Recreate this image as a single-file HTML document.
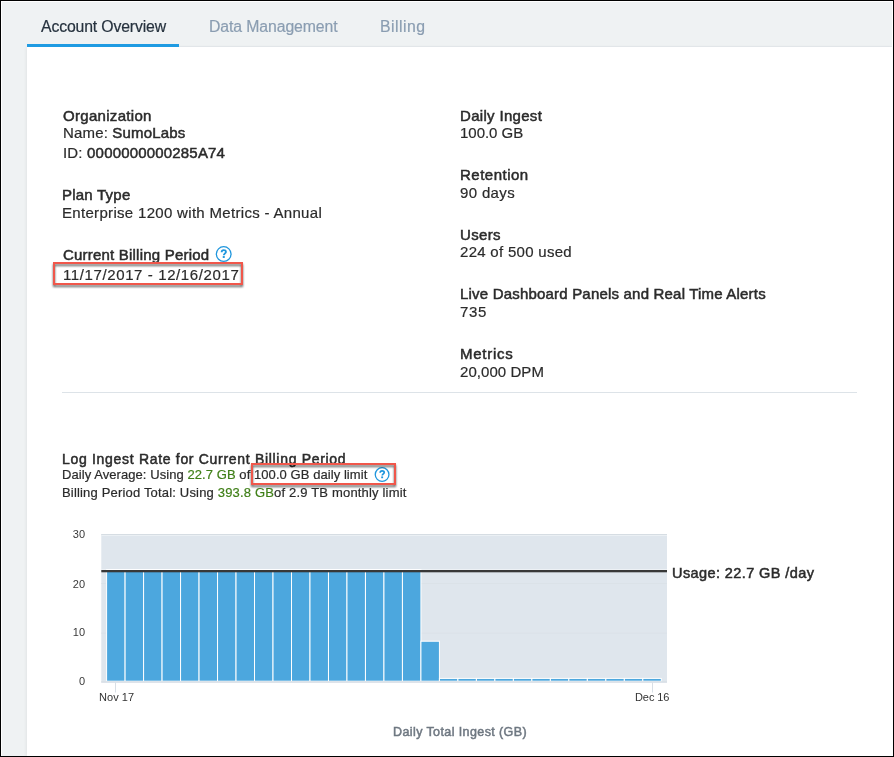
<!DOCTYPE html>
<html><head><meta charset="utf-8"><style>
html,body{margin:0;padding:0;}
body{width:894px;height:757px;position:relative;overflow:hidden;background:#000;font-family:"Liberation Sans",sans-serif;}
#frame{position:absolute;left:1px;top:1px;width:892px;height:755px;background:#fff;}
#bg{position:absolute;left:2px;top:2px;width:890px;height:754px;background:#eff2f3;}
#panel{position:absolute;left:27px;top:47px;width:865px;height:709px;background:#fff;box-shadow:-1px 0 3px rgba(0,0,0,0.06);}
#tabline{position:absolute;left:27px;top:46px;width:865px;height:1px;background:#e7ebee;}
#ul{position:absolute;left:27px;top:44px;width:152px;height:3px;background:#1f9be2;}
#sep{position:absolute;left:62px;top:392px;width:795px;height:1px;background:#dde3e8;}
.t{position:absolute;white-space:nowrap;will-change:transform;}
.t{-webkit-text-stroke:0.2px currentColor;} .m{-webkit-text-stroke:0.5px currentColor;}
.rb{position:absolute;box-sizing:border-box;border:2.6px solid #f0574b;filter:drop-shadow(0.4px 2.4px 0.9px rgba(0,0,0,0.6));}
</style></head><body>
<div id="frame"></div><div id="bg"></div><div id="tabline"></div><div id="panel"></div><div id="ul"></div><div id="sep"></div>
<div class="t" style="left:40.89px;top:18.63px;font-size:15.8px;line-height:15.8px;color:#26323e;letter-spacing:-0.151px;">Account Overview</div>
<div class="t" style="left:209.29px;top:18.63px;font-size:15.8px;line-height:15.8px;color:#8a9db1;letter-spacing:-0.094px;">Data Management</div>
<div class="t" style="left:380.39px;top:18.63px;font-size:15.8px;line-height:15.8px;color:#8a9db1;letter-spacing:0.483px;">Billing</div>
<div class="t m" style="left:63.15px;top:108.10px;font-size:15px;line-height:15px;color:#2b2b2b;letter-spacing:0.308px;">Organization</div>
<div class="t" style="left:62.75px;top:124.90px;font-size:15px;line-height:15px;color:#2b2b2b;letter-spacing:0.159px;">Name: <span class=m>SumoLabs</span></div>
<div class="t" style="left:62.95px;top:145.00px;font-size:15px;line-height:15px;color:#2b2b2b;letter-spacing:0.182px;">ID: <span class=m>0000000000285A74</span></div>
<div class="t m" style="left:62.15px;top:187.30px;font-size:15px;line-height:15px;color:#2b2b2b;letter-spacing:0.225px;">Plan Type</div>
<div class="t" style="left:62.15px;top:205.20px;font-size:15px;line-height:15px;color:#2b2b2b;letter-spacing:0.314px;">Enterprise 1200 with Metrics - Annual</div>
<div class="t m" style="left:63.15px;top:247.00px;font-size:15px;line-height:15px;color:#2b2b2b;letter-spacing:0.206px;">Current Billing Period</div>
<div class="t" style="left:62.95px;top:266.90px;font-size:15px;line-height:15px;color:#2b2b2b;letter-spacing:0.608px;">11/17/2017 - 12/16/2017</div>
<div class="t m" style="left:459.65px;top:108.30px;font-size:15px;line-height:15px;color:#2b2b2b;letter-spacing:0.316px;">Daily Ingest</div>
<div class="t" style="left:459.65px;top:124.90px;font-size:15px;line-height:15px;color:#2b2b2b;letter-spacing:-0.020px;">100.0 GB</div>
<div class="t m" style="left:459.55px;top:167.30px;font-size:15px;line-height:15px;color:#2b2b2b;letter-spacing:0.491px;">Retention</div>
<div class="t" style="left:459.65px;top:184.90px;font-size:15px;line-height:15px;color:#2b2b2b;letter-spacing:0.351px;">90 days</div>
<div class="t m" style="left:459.65px;top:226.80px;font-size:15px;line-height:15px;color:#2b2b2b;letter-spacing:0.345px;">Users</div>
<div class="t" style="left:459.65px;top:243.70px;font-size:15px;line-height:15px;color:#2b2b2b;letter-spacing:0.290px;">224 of 500 used</div>
<div class="t m" style="left:459.65px;top:286.00px;font-size:15px;line-height:15px;color:#2b2b2b;letter-spacing:0.195px;">Live Dashboard Panels and Real Time Alerts</div>
<div class="t" style="left:459.65px;top:304.10px;font-size:15px;line-height:15px;color:#2b2b2b;letter-spacing:0.709px;">735</div>
<div class="t m" style="left:459.65px;top:346.10px;font-size:15px;line-height:15px;color:#2b2b2b;letter-spacing:0.751px;">Metrics</div>
<div class="t" style="left:459.65px;top:363.70px;font-size:15px;line-height:15px;color:#2b2b2b;letter-spacing:0.062px;">20,000 DPM</div>
<div class="t m" style="left:62.22px;top:451.85px;font-size:14px;line-height:14px;color:#2b2b2b;letter-spacing:0.692px;">Log Ingest Rate for Current Billing Period</div>
<div class="t" style="left:62.29px;top:467.50px;font-size:13px;line-height:13px;color:#2b2b2b;letter-spacing:0.068px;">Daily Average: Using <span style="color:#3f7f17">22.7 GB</span> of 100.0 GB daily limit</div>
<div class="t" style="left:62.29px;top:485.90px;font-size:13px;line-height:13px;color:#2b2b2b;letter-spacing:0.177px;">Billing Period Total: Using <span style="color:#3f7f17">393.8 GB</span>of 2.9 TB monthly limit</div>
<div class="t m" style="left:671.99px;top:565.73px;font-size:14.5px;line-height:14.5px;color:#2b2b2b;letter-spacing:0.404px;">Usage: 22.7 GB /day</div>
<div class="t m" style="left:393.43px;top:725.62px;font-size:12.5px;line-height:12.5px;color:#6e7781;letter-spacing:0.400px;">Daily Total Ingest (GB)</div>
<div class="t" style="left:98.63px;top:691.69px;font-size:11px;line-height:11px;color:#333;letter-spacing:0.034px;-webkit-text-stroke:0;">Nov 17</div>
<div class="t" style="left:635.23px;top:691.69px;font-size:11px;line-height:11px;color:#333;letter-spacing:-0.086px;-webkit-text-stroke:0;">Dec 16</div>
<svg width="894" height="757" viewBox="0 0 894 757" style="position:absolute;left:0;top:0">
<rect x="101.3" y="534" width="565.7" height="148.6" fill="#dfe6ed"/>
<rect x="101.3" y="534" width="565.7" height="1" fill="#d6dde3"/>
<rect x="101.3" y="535" width="565.7" height="1" fill="#ebf0f4"/>
<rect x="101.3" y="583" width="565.7" height="1" fill="#dbe2e8"/>
<rect x="101.3" y="632.6" width="565.7" height="1" fill="#dbe2e8"/>
<rect x="101.3" y="681.5" width="565.7" height="1" fill="#d9e0e7"/>
<rect x="106.60" y="569.53" width="18.490" height="111.67" fill="#4ca7de" stroke="#fff" stroke-width="1"/>
<rect x="125.09" y="569.53" width="18.490" height="111.67" fill="#4ca7de" stroke="#fff" stroke-width="1"/>
<rect x="143.58" y="569.53" width="18.490" height="111.67" fill="#4ca7de" stroke="#fff" stroke-width="1"/>
<rect x="162.07" y="569.53" width="18.490" height="111.67" fill="#4ca7de" stroke="#fff" stroke-width="1"/>
<rect x="180.56" y="569.53" width="18.490" height="111.67" fill="#4ca7de" stroke="#fff" stroke-width="1"/>
<rect x="199.05" y="569.53" width="18.490" height="111.67" fill="#4ca7de" stroke="#fff" stroke-width="1"/>
<rect x="217.54" y="569.53" width="18.490" height="111.67" fill="#4ca7de" stroke="#fff" stroke-width="1"/>
<rect x="236.03" y="569.53" width="18.490" height="111.67" fill="#4ca7de" stroke="#fff" stroke-width="1"/>
<rect x="254.52" y="569.53" width="18.490" height="111.67" fill="#4ca7de" stroke="#fff" stroke-width="1"/>
<rect x="273.01" y="569.53" width="18.490" height="111.67" fill="#4ca7de" stroke="#fff" stroke-width="1"/>
<rect x="291.50" y="569.53" width="18.490" height="111.67" fill="#4ca7de" stroke="#fff" stroke-width="1"/>
<rect x="309.99" y="569.53" width="18.490" height="111.67" fill="#4ca7de" stroke="#fff" stroke-width="1"/>
<rect x="328.48" y="569.53" width="18.490" height="111.67" fill="#4ca7de" stroke="#fff" stroke-width="1"/>
<rect x="346.97" y="569.53" width="18.490" height="111.67" fill="#4ca7de" stroke="#fff" stroke-width="1"/>
<rect x="365.46" y="569.53" width="18.490" height="111.67" fill="#4ca7de" stroke="#fff" stroke-width="1"/>
<rect x="383.95" y="569.53" width="18.490" height="111.67" fill="#4ca7de" stroke="#fff" stroke-width="1"/>
<rect x="402.44" y="569.53" width="18.490" height="111.67" fill="#4ca7de" stroke="#fff" stroke-width="1"/>
<rect x="420.93" y="641.22" width="18.490" height="39.98" fill="#4ca7de" stroke="#fff" stroke-width="1"/>
<rect x="439.42" y="678.41" width="18.490" height="2.79" fill="#4ca7de" stroke="#fff" stroke-width="1"/>
<rect x="457.91" y="678.41" width="18.490" height="2.79" fill="#4ca7de" stroke="#fff" stroke-width="1"/>
<rect x="476.40" y="678.41" width="18.490" height="2.79" fill="#4ca7de" stroke="#fff" stroke-width="1"/>
<rect x="494.89" y="678.41" width="18.490" height="2.79" fill="#4ca7de" stroke="#fff" stroke-width="1"/>
<rect x="513.38" y="678.41" width="18.490" height="2.79" fill="#4ca7de" stroke="#fff" stroke-width="1"/>
<rect x="531.87" y="678.41" width="18.490" height="2.79" fill="#4ca7de" stroke="#fff" stroke-width="1"/>
<rect x="550.36" y="678.41" width="18.490" height="2.79" fill="#4ca7de" stroke="#fff" stroke-width="1"/>
<rect x="568.85" y="678.41" width="18.490" height="2.79" fill="#4ca7de" stroke="#fff" stroke-width="1"/>
<rect x="587.34" y="678.41" width="18.490" height="2.79" fill="#4ca7de" stroke="#fff" stroke-width="1"/>
<rect x="605.83" y="678.41" width="18.490" height="2.79" fill="#4ca7de" stroke="#fff" stroke-width="1"/>
<rect x="624.32" y="678.41" width="18.490" height="2.79" fill="#4ca7de" stroke="#fff" stroke-width="1"/>
<rect x="642.81" y="678.41" width="18.490" height="2.79" fill="#4ca7de" stroke="#fff" stroke-width="1"/>
<rect x="101.3" y="681.2" width="565.7" height="1.3" fill="#d9e0e7"/>
<rect x="101.3" y="569" width="565.7" height="1" fill="#fff" fill-opacity="0.45"/>
<rect x="101.3" y="570" width="565.7" height="2.3" fill="#383838"/>
<rect x="115" y="682.5" width="1" height="10" fill="#d8dfe6"/>
<rect x="652" y="682.5" width="1" height="10" fill="#d8dfe6"/>
<circle cx="223.7" cy="254.05" r="7.35" fill="none" stroke="#1f96dd" stroke-width="1.3"/><g transform="translate(223.7,254.05) scale(1.0)"><path transform="scale(0.8)" d="M-2.6,-2.3 C-2.6,-4.1 -1.3,-5 0.1,-5 C1.6,-5 2.8,-4.1 2.8,-2.7 C2.8,-1.1 0.2,-0.6 0.2,1.4" fill="none" stroke="#1f96dd" stroke-width="2.3"/><rect x="-0.95" y="2.0" width="2.0" height="1.9" fill="#1f96dd"/></g>
<circle cx="382.1" cy="474.55" r="6.85" fill="none" stroke="#1f96dd" stroke-width="1.3"/><g transform="translate(382.1,474.55) scale(0.9375)"><path transform="scale(0.8)" d="M-2.6,-2.3 C-2.6,-4.1 -1.3,-5 0.1,-5 C1.6,-5 2.8,-4.1 2.8,-2.7 C2.8,-1.1 0.2,-0.6 0.2,1.4" fill="none" stroke="#1f96dd" stroke-width="2.3"/><rect x="-0.95" y="2.0" width="2.0" height="1.9" fill="#1f96dd"/></g>
</svg>
<div class="t" style="left:40px;width:45.1px;text-align:right;top:528.59px;font-size:11px;line-height:11px;color:#3a3a3a;-webkit-text-stroke:0">30</div>
<div class="t" style="left:40px;width:45.1px;text-align:right;top:578.59px;font-size:11px;line-height:11px;color:#3a3a3a;-webkit-text-stroke:0">20</div>
<div class="t" style="left:40px;width:45.1px;text-align:right;top:626.59px;font-size:11px;line-height:11px;color:#3a3a3a;-webkit-text-stroke:0">10</div>
<div class="t" style="left:40px;width:45.1px;text-align:right;top:675.59px;font-size:11px;line-height:11px;color:#3a3a3a;-webkit-text-stroke:0">0</div>
<div class="rb" style="left:53.2px;top:262.4px;width:190.2px;height:22.200000000000045px"></div>
<div class="rb" style="left:250.6px;top:463.0px;width:145.4px;height:22.399999999999977px"></div>

</body></html>
